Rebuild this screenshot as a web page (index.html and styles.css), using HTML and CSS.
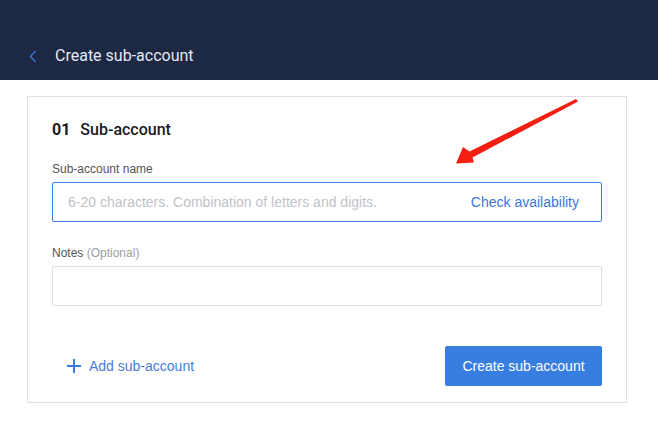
FILE: index.html
```html
<!DOCTYPE html>
<html lang="en">
  <head>
    <meta charset="UTF-8" />
    <title>Create sub-account</title>
    <link rel="stylesheet" href="styles.css">
  </head>
  <body>
    <div class="top_bar">
      <svg class="back" width="8" height="13" viewBox="0 0 8 13">
        <path d="M6.5 1 L1.5 6.5 L6.5 12" fill="none" stroke="#3d7fe0" stroke-width="1.2" />
      </svg>
      <span class="top_title">Create sub-account</span>
    </div>

    <div class="card">
      <h2 class="step"><span class="step_no">01</span>Sub-account</h2>

      <label class="field_label">Sub-account name</label>
      <div class="input active">
        <span class="placeholder">6-20 characters. Combination of letters and digits.</span>
        <a class="check">Check availability</a>
      </div>

      <label class="field_label notes_label">Notes <span class="optional">(Optional)</span></label>
      <div class="input"></div>

      <div class="actions">
        <a class="add_link">
          <svg width="14" height="14" viewBox="0 0 14 14">
            <path d="M7 0 V14 M0 7 H14" stroke="#3a7be0" stroke-width="2" />
          </svg>
          Add sub-account
        </a>
        <button class="primary">Create sub-account</button>
      </div>
    </div>

    <!-- annotation arrow -->
    <svg class="annot" width="658" height="442" viewBox="0 0 658 442">
      <polygon points="576,99 578,101.5 472.5,157.5 474,162.5 456,163.5 463,147 469.5,151.5" fill="#f41e12" />
    </svg>
  </body>
</html>
```

FILE: styles.css
```css
* {
  margin: 0;
  padding: 0;
  box-sizing: border-box;
}
body {
  background: #fff;
  font-family: "Liberation Sans", Arial, sans-serif;
  color: #333;
  position: relative;
  width: 658px;
  height: 442px;
  overflow: hidden;
}
.top_bar {
  height: 80px;
  background: #1d2843;
  display: flex;
  align-items: center;
  padding: 32px 0 0 29px;
}
.top_bar .back {
  display: block;
}
.top_title {
  margin-left: 18px;
  font-family: Roboto, "Liberation Sans", sans-serif;
  font-size: 16px;
  color: #e3e7ef;
  line-height: 20px;
}

.card {
  margin: 16px 0 0 27px;
  width: 600px;
  border: 1px solid #dfe1e6;
  padding: 23px 24px 16px 24px;
}
.step {
  font-family: Roboto, "Liberation Sans", sans-serif;
  font-size: 16px;
  font-weight: 500;
  line-height: 20px;
  color: #1b1b1f;
}
.step_no {
  font-weight: 700;
  margin-right: 10px;
}
.field_label {
  display: block;
  margin-top: 21px;
  font-size: 12px;
  line-height: 16px;
  color: #555;
}
.notes_label {
  margin-top: 23px;
}
.optional {
  color: #9aa0aa;
}
.input {
  margin-top: 5px;
  height: 40px;
  border: 1px solid #dcdfe6;
  border-radius: 2px;
  display: flex;
  align-items: center;
  justify-content: space-between;
  padding: 0 22px 0 15px;
  font-size: 14px;
}
.notes_label + .input {
  margin-top: 5px;
}
.input.active {
  border-color: #3a7be0;
}
.placeholder {
  color: #c0c3c9;
}
.check {
  color: #3a78d8;
}

.actions {
  margin-top: 40px;
  display: flex;
  align-items: center;
  justify-content: space-between;
}
.add_link {
  display: flex;
  align-items: center;
  gap: 8px;
  margin-left: 15px;
  font-size: 14px;
  color: #4a7ad8;
}
.primary {
  width: 157px;
  height: 40px;
  border: none;
  border-radius: 2px;
  background: #377ee0;
  color: #fff;
  font-family: "Liberation Sans", Arial, sans-serif;
  font-size: 14px;
}

.annot {
  position: absolute;
  left: 0;
  top: 0;
  pointer-events: none;
}
```
